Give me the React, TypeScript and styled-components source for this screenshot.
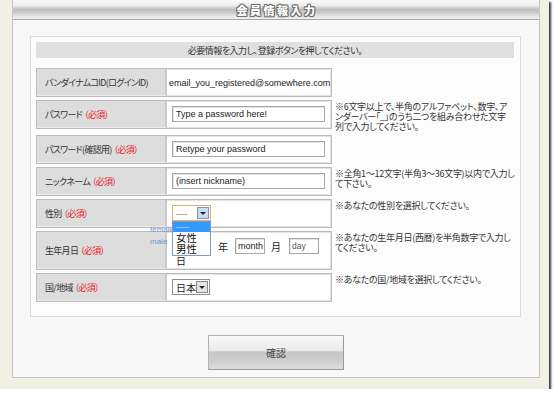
import React from "react";
import styled, { createGlobalStyle } from "styled-components";

const GlobalStyle = createGlobalStyle`
  html, body { margin: 0; padding: 0; background: #ffffff; }
  body {
    font-family: "Liberation Sans", "Noto Sans CJK JP", sans-serif;
    font-feature-settings: "palt";
    color: #333;
  }
  * { box-sizing: border-box; }
`;

const Frame = styled.div`
  width: 549px;
  height: 389px;
  background: #f2f0e3;
  box-shadow: 2px 2px 2px rgba(20, 20, 20, 0.85);
  overflow: hidden;
`;

const Panel = styled.div`
  margin-left: 12px;
  width: 528px;
  height: 378px;
  background: #f8f8f8;
  border: 1px solid #c4c4c4;
  border-top: none;
`;

const TitleBar = styled.div`
  height: 20px;
  display: flex;
  align-items: center;
  justify-content: center;
  background: linear-gradient(
    #fbfbfb 0%,
    #ececec 30%,
    #bdbdbd 50%,
    #c9c9c9 65%,
    #e6e6e6 85%,
    #efefef 100%
  );
  border-bottom: 1px solid #a9a9a9;
`;

const Title = styled.div`
  font-family: "Noto Sans CJK JP", sans-serif;
  font-size: 11px;
  font-weight: 900;
  letter-spacing: 2.5px;
  margin-left: 2px;
  color: #ffffff;
  text-shadow: 1px 0 #707070, -1px 0 #707070, 0 1px #707070, 0 -1px #707070,
    1px 1px #707070, -1px -1px #707070, 1px -1px #707070, -1px 1px #707070;
`;

const Body = styled.div`
  padding: 16px 18px 0 17px;
`;

const FormBox = styled.div`
  background: #fcfcfc;
  border: 1px solid #dadada;
  padding: 5px 6px 14px 5px;
`;

const Intro = styled.div`
  height: 16px;
  background: #e0e0e0;
  display: flex;
  align-items: center;
  justify-content: center;
  font-family: "Noto Sans CJK JP", sans-serif;
  font-size: 9px;
  letter-spacing: -0.5px;
  color: #333;
`;

const Rows = styled.div`
  margin-top: 10px;
  display: flex;
  flex-direction: column;
  gap: 3px;
`;

const FieldRow = styled.div`
  display: grid;
  grid-template-columns: 296px 1fr;
  column-gap: 3px;
  align-items: start;
`;

const FieldBox = styled.div<{ $tall?: boolean }>`
  display: flex;
  min-height: ${(p) => (p.$tall ? "39px" : "29px")};
  border: 1px solid #bcbcbc;
  box-shadow: inset 0 0 0 1px #e4e4e4;
  background: #ffffff;
`;

const Label = styled.div`
  width: 130px;
  flex: none;
  display: flex;
  align-items: center;
  padding-left: 8px;
  background: #dddddd;
  border-right: 2px solid #c9c9c9;
  border-bottom: 1px solid #eaeaea;
  font-family: "Noto Sans CJK JP", sans-serif;
  font-size: 9px;
  letter-spacing: -0.7px;
  color: #333;
  white-space: nowrap;
`;

const Required = styled.span`
  color: #e8232b;
  margin-left: 2px;
`;

const Value = styled.div<{ $pad?: number; $top?: number }>`
  flex: 1;
  display: flex;
  flex-wrap: wrap;
  align-items: center;
  align-content: flex-start;
  padding: ${(p) => p.$top ?? 5}px 4px 0 ${(p) => p.$pad ?? 5}px;
  color: #222;
  position: relative;
`;

const PlainText = styled.span`
  font-family: "Liberation Sans", sans-serif;
  font-size: 9px;
  line-height: 16px;
  padding-top: 1px;
  white-space: nowrap;
`;

const TextInput = styled.div<{ $w: number; $muted?: boolean }>`
  width: ${(p) => p.$w}px;
  height: 16px;
  border: 1px solid #a7a7a7;
  box-shadow: inset 1px 1px 0 #e2e2e2;
  background: #fff;
  display: flex;
  align-items: center;
  padding-left: ${(p) => (p.$w < 40 ? 2 : 3)}px;
  font-family: "Liberation Sans", sans-serif;
  font-size: ${(p) => (p.$muted ? "8.5px" : "9px")};
  color: ${(p) => (p.$muted ? "#555" : "#222")};
  white-space: nowrap;
  overflow: hidden;
`;

const SelectWrap = styled.div`
  position: relative;
`;

const SelectBox = styled.div<{ $focused?: boolean; $w: number }>`
  width: ${(p) => p.$w}px;
  height: 16px;
  display: flex;
  align-items: center;
  justify-content: space-between;
  padding: 0 1px 0 3px;
  background: #fff;
  border: 1px solid ${(p) => (p.$focused ? "#d9b36a" : "#8d8d8d")};
  font-family: "Noto Sans CJK JP", sans-serif;
  font-size: 10px;
  color: #222;
`;

const Dashes = styled.span`
  font-family: "Liberation Sans", sans-serif;
  font-size: 8px;
  color: #666;
  letter-spacing: -0.5px;
`;

const ArrowBtn = styled.span<{ $blue?: boolean }>`
  width: 12px;
  height: 12px;
  display: flex;
  align-items: center;
  justify-content: center;
  background: ${(p) => (p.$blue ? "#c9dcef" : "#e4e4e4")};
  border: 1px solid ${(p) => (p.$blue ? "#7d97b4" : "#8a8a8a")};
  &::after {
    content: "";
    border-left: 3px solid transparent;
    border-right: 3px solid transparent;
    border-top: 3px solid #222;
  }
`;

const DropList = styled.div`
  position: absolute;
  top: 16px;
  left: 0;
  width: 39px;
  height: 35px;
  background: #fff;
  border: 1px solid #7f9db9;
  z-index: 10;
  font-family: "Noto Sans CJK JP", sans-serif;
  color: #111;
`;

const Option = styled.div<{ $active?: boolean }>`
  height: ${(p) => (p.$active ? "10px" : "11px")};
  line-height: ${(p) => (p.$active ? "9px" : "11px")};
  padding-left: 3px;
  background: ${(p) => (p.$active ? "#3399ff" : "transparent")};
  color: ${(p) => (p.$active ? "#dfefff" : "#111")};
  font-family: ${(p) => (p.$active ? `"Liberation Sans", sans-serif` : "inherit")};
  font-size: ${(p) => (p.$active ? "8px" : "10.5px")};
`;

const GhostHint = styled.div`
  position: absolute;
  top: 2px;
  left: -23px;
  font-family: "Liberation Sans", sans-serif;
  font-size: 8px;
  line-height: 12px;
  color: #6e98cf;
  z-index: 11;
`;

const Unit = styled.span<{ $l?: number; $r?: number }>`
  font-family: "Noto Sans CJK JP", sans-serif;
  font-size: 10px;
  line-height: 13px;
  margin-left: ${(p) => p.$l ?? 0}px;
  margin-right: ${(p) => p.$r ?? 0}px;
  color: #222;
`;

const Note = styled.div`
  padding-top: 2px;
  font-family: "Noto Sans CJK JP", sans-serif;
  font-size: 9px;
  line-height: 10px;
  letter-spacing: -0.3px;
  color: #333;
  white-space: nowrap;
`;

const ButtonBar = styled.div`
  display: flex;
  justify-content: center;
  margin-top: 18px;
`;

const ConfirmButton = styled.button`
  width: 136px;
  height: 35px;
  margin-left: 1px;
  border: 1px solid #b2b2b2;
  border-right-color: #999;
  border-bottom-color: #999;
  background: linear-gradient(
    #fafafa 0%,
    #e9e9e9 45%,
    #c6c6c6 48%,
    #cdcdcd 75%,
    #dedede 100%
  );
  font-family: "Noto Sans CJK JP", sans-serif;
  font-size: 10px;
  color: #444;
  padding: 0;
`;

type Row = {
  label: string;
  required?: boolean;
  note?: string[];
  tall?: boolean;
  value: React.ReactNode;
  pad?: number;
  top?: number;
};

const rows: Row[] = [
  {
    label: "バンダイナムコID(ログインID)",
    value: <PlainText>email_you_registered@somewhere.com</PlainText>,
    pad: 2,
  },
  {
    label: "パスワード",
    required: true,
    note: [
      "※6文字以上で、半角のアルファベット、数字、ア",
      "ンダーバー「_」のうち二つを組み合わせた文字",
      "列で入力してください。",
    ],
    value: <TextInput $w={153}>Type a password here!</TextInput>,
  },
  {
    label: "パスワード(確認用)",
    required: true,
    value: <TextInput $w={153}>Retype your password</TextInput>,
  },
  {
    label: "ニックネーム",
    required: true,
    note: ["※全角1～12文字(半角3～36文字)以内で入力し", "て下さい。"],
    value: <TextInput $w={153}>(insert nickname)</TextInput>,
  },
  {
    label: "性別",
    required: true,
    note: ["※あなたの性別を選択してください。"],
    value: (
      <SelectWrap>
        <SelectBox $w={39} $focused>
          <Dashes>-----</Dashes>
          <ArrowBtn $blue />
        </SelectBox>
        <DropList>
          <Option $active>-----</Option>
          <Option>女性</Option>
          <Option>男性</Option>
          <GhostHint>
            female
            <br />
            male
          </GhostHint>
        </DropList>
      </SelectWrap>
    ),
  },
  {
    label: "生年月日",
    required: true,
    tall: true,
    top: 6,
    note: ["※あなたの生年月日(西暦)を半角数字で入力し", "てください。"],
    value: (
      <>
        <SelectBox $w={39}>
          <Dashes>-----</Dashes>
          <ArrowBtn />
        </SelectBox>
        <Unit $l={7} $r={7}>年</Unit>
        <TextInput $w={30}>month</TextInput>
        <Unit $l={6} $r={8}>月</Unit>
        <TextInput $w={30} $muted>
          day
        </TextInput>
        <Unit $l={4}>日</Unit>
      </>
    ),
  },
  {
    label: "国/地域",
    required: true,
    note: ["※あなたの国/地域を選択してください。"],
    value: (
      <SelectBox $w={38}>
        <span>日本</span>
        <ArrowBtn />
      </SelectBox>
    ),
  },
];

export default function App() {
  return (
    <>
      <GlobalStyle />
      <Frame>
        <Panel>
          <TitleBar>
            <Title>会員情報入力</Title>
          </TitleBar>
          <Body>
            <FormBox>
              <Intro>必要情報を入力し、登録ボタンを押してください。</Intro>
              <Rows>
                {rows.map((r) => (
                  <FieldRow key={r.label}>
                    <FieldBox $tall={r.tall}>
                      <Label>
                        {r.label}
                        {r.required && <Required>（必須）</Required>}
                      </Label>
                      <Value $pad={r.pad} $top={r.top}>
                        {r.value}
                      </Value>
                    </FieldBox>
                    <Note>
                      {r.note?.map((line, i) => (
                        <React.Fragment key={i}>
                          {i > 0 && <br />}
                          {line}
                        </React.Fragment>
                      ))}
                    </Note>
                  </FieldRow>
                ))}
              </Rows>
            </FormBox>
            <ButtonBar>
              <ConfirmButton>確認</ConfirmButton>
            </ButtonBar>
          </Body>
        </Panel>
      </Frame>
    </>
  );
}
